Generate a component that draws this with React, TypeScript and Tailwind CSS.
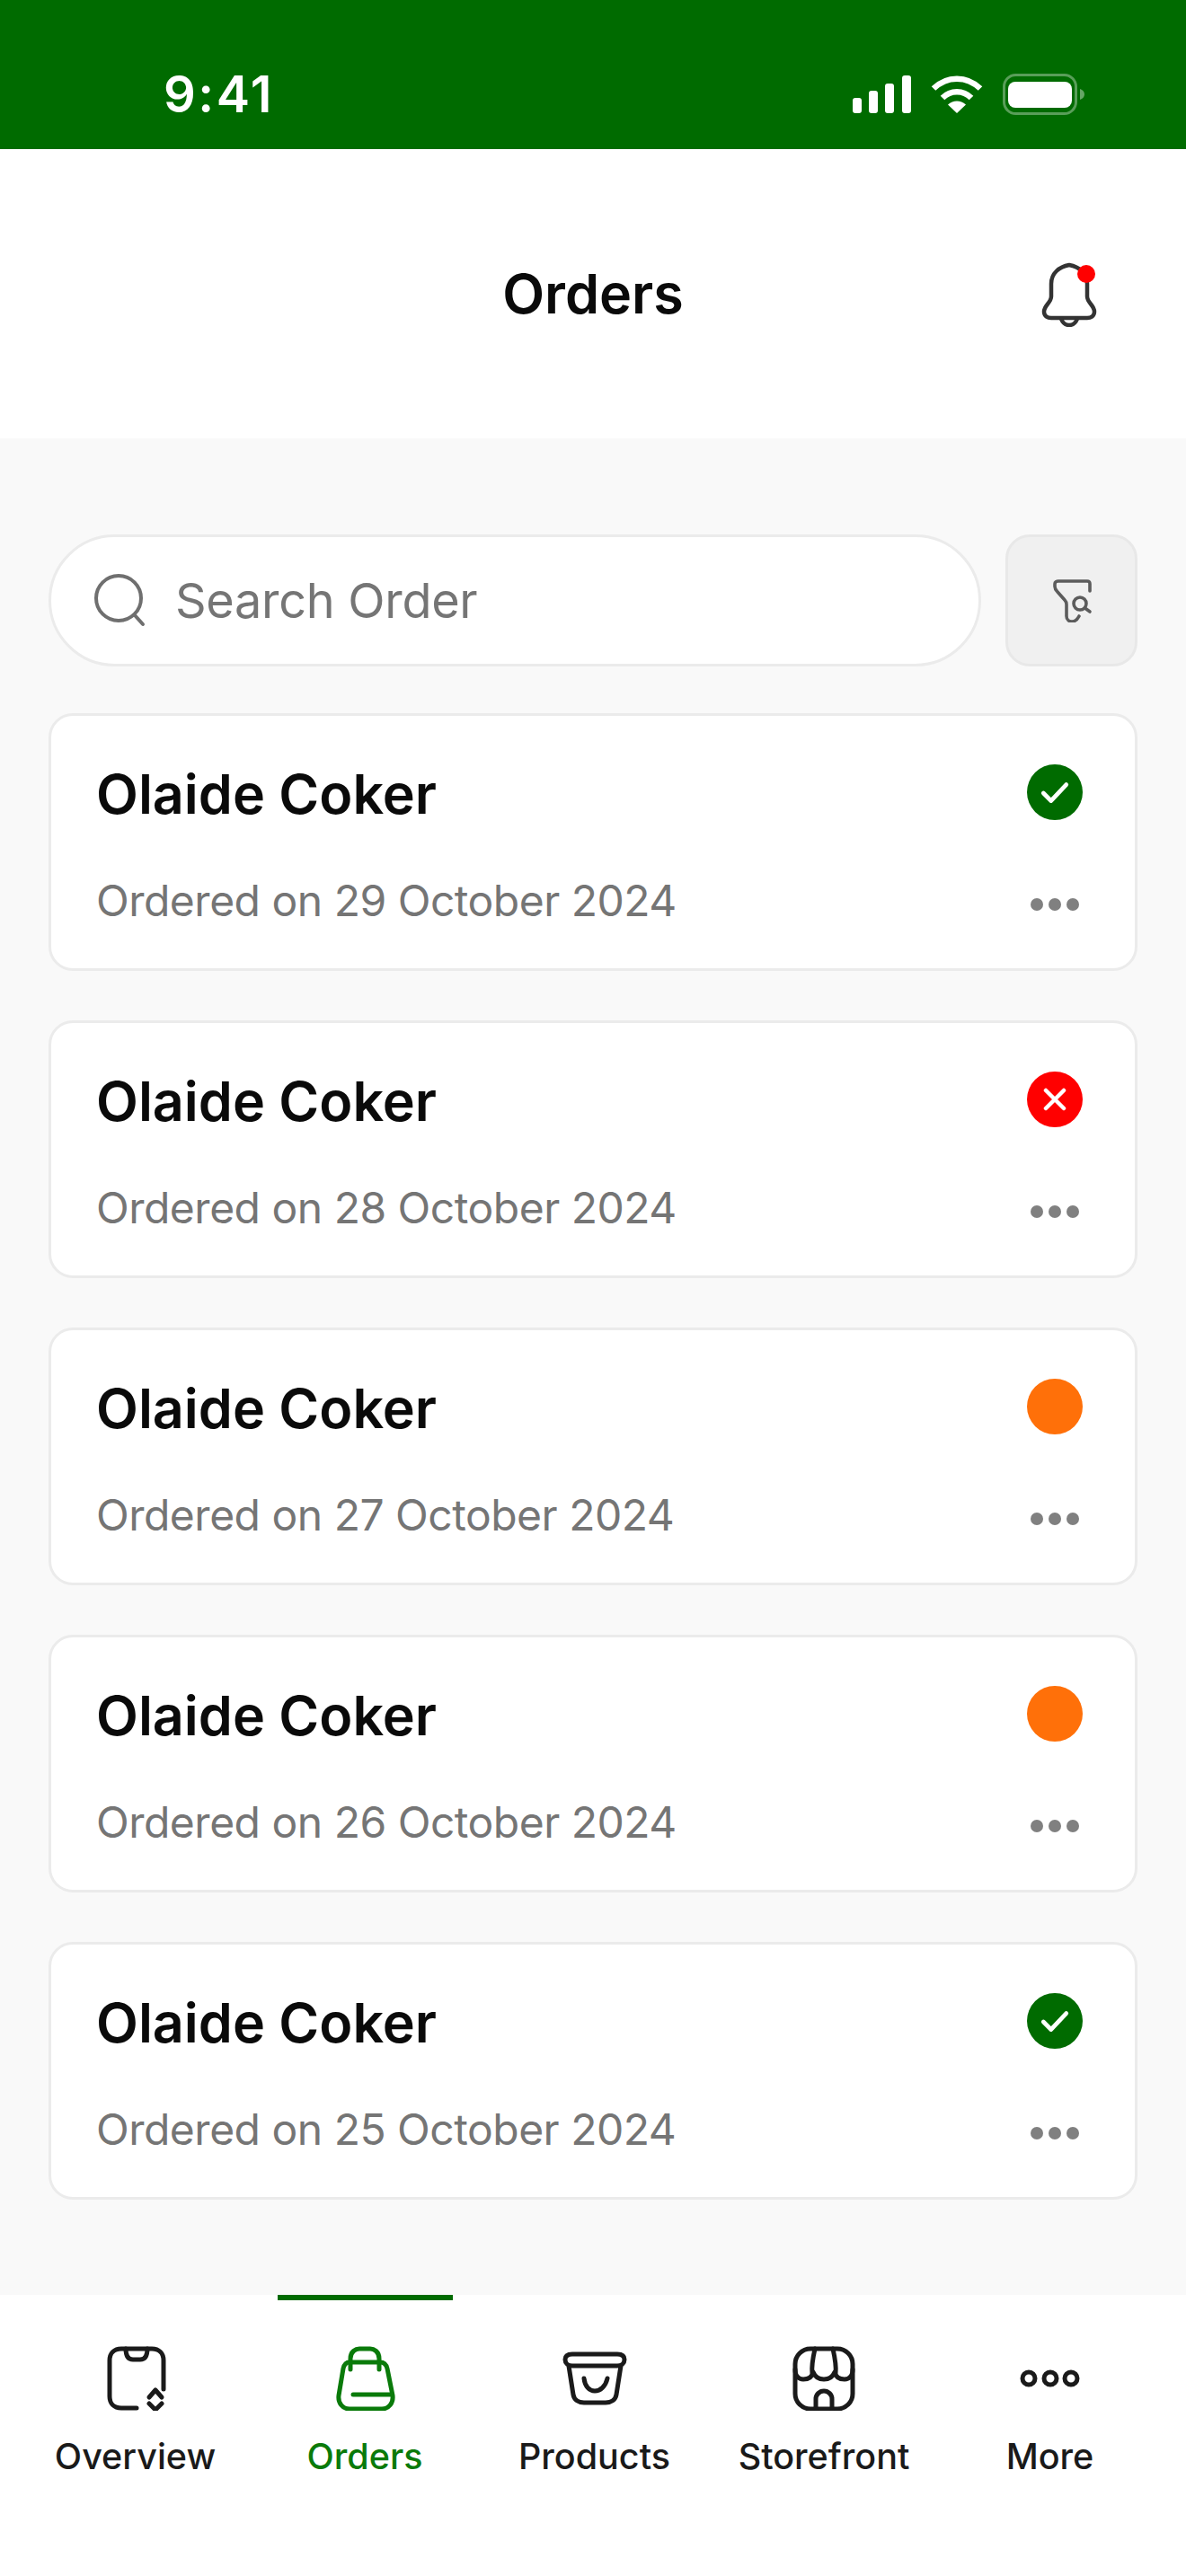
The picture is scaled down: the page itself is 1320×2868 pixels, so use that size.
import React from "react";

const inter = "font-['Inter',sans-serif]";

function Signal() {
  return (
    <svg width="65" height="42" viewBox="0 0 65 42" fill="#fff">
      <rect x="0" y="25" width="10" height="17" rx="3" />
      <rect x="18" y="17" width="10" height="25" rx="3" />
      <rect x="36" y="9" width="10" height="33" rx="3" />
      <rect x="55" y="0" width="10" height="42" rx="3" />
    </svg>
  );
}

function Wifi() {
  return (
    <svg width="58" height="42" viewBox="0 0 58 42" fill="none" stroke="#fff" strokeWidth="6.5">
      <path d="M3 14.5C18 0 40 0 55 14.5" />
      <path d="M13 25C22 16 36 16 45 25" />
      <path d="M29 42L19 32.5C25 27 33 27 39 32.5Z" fill="#fff" stroke="none" />
    </svg>
  );
}

function Battery() {
  return (
    <svg width="92" height="46" viewBox="0 0 92 46" fill="none">
      <rect x="1.5" y="1.5" width="80" height="43" rx="13" stroke="#fff" strokeOpacity="0.35" strokeWidth="3" />
      <rect x="6" y="9" width="71" height="29" rx="8" fill="#fff" />
      <path d="M86 17C89 18 91 20 91 23C91 26 89 28 86 29Z" fill="#fff" fillOpacity="0.4" />
    </svg>
  );
}

function Bell() {
  return (
    <div className="relative w-[72px] h-[72px]">
      <svg width="72" height="72" viewBox="0 0 72 72" fill="none" stroke="#333" strokeWidth="4.5" strokeLinejoin="round" strokeLinecap="round">
        <path d="M36 3C25 5 16 12 16 24V38C16 45 8 48 8 55C8 60 12 62 16 62H56C60 62 64 60 64 55C64 48 56 45 56 38V24C56 12 47 5 36 3Z" />
        <path d="M27 63C29 68 32 70 36 70C40 70 43 68 45 63" />
      </svg>
      <span className="absolute left-[45px] top-[3px] w-5 h-5 rounded-full bg-[#ff0000]" />
    </div>
  );
}

function SearchIcon() {
  return (
    <svg width="60" height="60" viewBox="0 0 60 60" fill="none" stroke="#6f6f6f" strokeWidth="4" strokeLinecap="round">
      <circle cx="28" cy="27" r="25" />
      <path d="M46 46L55 56" />
    </svg>
  );
}

function FilterIcon() {
  return (
    <svg width="48" height="48" viewBox="0 0 48 48" fill="none" stroke="#5c5c5c" strokeWidth="3.6" strokeLinecap="round" strokeLinejoin="round">
      <path d="M44 13V5C44 3 43 2 41 2H9C7 2 5 3 5 5V8C5 10 6 12 8 14L16 23C17.500 24.500 18 26 18 28V41C18 45 21 47 24 47C27 47 30 45 32 41" />
      <circle cx="33" cy="27" r="7" />
      <path d="M38.500 32L44 36" />
    </svg>
  );
}

function StatusIcon({ status }: { status: "ok" | "fail" | "pending" }) {
  const bg = status === "ok" ? "bg-[#006b00]" : status === "fail" ? "bg-[#ff0000]" : "bg-[#ff7009]";
  return (
    <div className={`w-[62px] h-[62px] rounded-full flex items-center justify-center ${bg}`}>
      {status === "ok" && (
        <svg width="36" height="36" viewBox="0 0 34 34" fill="none" stroke="#fff" strokeWidth="4.5" strokeLinecap="round" strokeLinejoin="round">
          <path d="M5 18L13 26L29 9" />
        </svg>
      )}
      {status === "fail" && (
        <svg width="26" height="26" viewBox="0 0 26 26" fill="none" stroke="#fff" strokeWidth="4.500" strokeLinecap="round">
          <path d="M3 3L23 23M23 3L3 23" />
        </svg>
      )}
    </div>
  );
}

function Dots() {
  return (
    <div className="flex gap-[6px]">
      <span className="w-[14px] h-[14px] rounded-full bg-[#808080]" />
      <span className="w-[14px] h-[14px] rounded-full bg-[#808080]" />
      <span className="w-[14px] h-[14px] rounded-full bg-[#808080]" />
    </div>
  );
}

function OverviewIcon() {
  return (
    <svg width="72" height="72" viewBox="0 0 72 72" fill="none" stroke="#1a1a1a" strokeWidth="5" strokeLinecap="round" strokeLinejoin="round">
      <path d="M37 69H20C12 69 7 64 7 56V16C7 8 12 3 20 3H54C62 3 67 8 67 16V48" />
      <path d="M25 3C25 11 28 15 33 15H41C46 15 49 11 49 3" />
      <path d="M51 57L58 49L65 57" />
      <path d="M51 64L58 71L65 64" />
    </svg>
  );
}

function OrdersIcon() {
  return (
    <svg width="72" height="72" viewBox="0 0 72 72" fill="none" stroke="#0a7a0a" strokeWidth="5" strokeLinecap="round" strokeLinejoin="round">
      <path d="M20 26V14C20 6 26 3 30 3H42C46 3 52 6 52 14V26" />
      <path d="M19 18H53C58 18 60 21 61 25L67 55C68 63 63 70 55 70H19C11 70 6 63 7 55L12 25C13 21 15 18 19 18Z" />
      <path d="M23 54H66" />
    </svg>
  );
}

function ProductsIcon() {
  return (
    <svg width="72" height="72" viewBox="0 0 72 72" fill="none" stroke="#1a1a1a" strokeWidth="5" strokeLinecap="round" strokeLinejoin="round">
      <path d="M11 9H61C66 9 69 11 69 15C69 19 66 22 61 22H11C6 22 3 19 3 15C3 11 6 9 11 9Z" />
      <path d="M7 22L12 54C13 60 18 63 24 63H48C54 63 59 60 60 54L65 22" />
      <path d="M24 36C25 45 30 50 36 50C42 50 48 45 50 36" />
    </svg>
  );
}

function StorefrontIcon() {
  return (
    <svg width="72" height="72" viewBox="0 0 72 72" fill="none" stroke="#1a1a1a" strokeWidth="5" strokeLinecap="round" strokeLinejoin="round">
      <rect x="4" y="3" width="64" height="67" rx="17" />
      <path d="M26 3C24 12 22 22 23 30M46 3C48 12 50 22 49 30" />
      <path d="M4 26C4 33 8 37 13 37C19 37 23 34 24 29C26 34 30 37 36 37C42 37 46 34 48 29C49 34 53 37 59 37C64 37 68 33 68 26" />
      <path d="M27 70V59C27 54 31 50 36 50C41 50 45 54 45 59V70" />
    </svg>
  );
}

function MoreIcon() {
  return (
    <svg width="72" height="72" viewBox="0 0 72 72" fill="none" stroke="#1a1a1a" strokeWidth="5">
      <circle cx="12" cy="36" r="7" />
      <circle cx="36" cy="36" r="7" />
      <circle cx="59" cy="36" r="7" />
    </svg>
  );
}

const orders: { date: string; status: "ok" | "fail" | "pending" }[] = [
  { date: "Ordered on 29 October 2024", status: "ok" },
  { date: "Ordered on 28 October 2024", status: "fail" },
  { date: "Ordered on 27 October 2024", status: "pending" },
  { date: "Ordered on 26 October 2024", status: "pending" },
  { date: "Ordered on 25 October 2024", status: "ok" },
];

function OrderCard({ date, status }: { date: string; status: "ok" | "fail" | "pending" }) {
  return (
    <div className="h-[287px] rounded-[27px] border-[3px] border-[#ebebeb] bg-white flex justify-between pl-[50px] pr-[58px]">
      <div className="flex flex-col pt-[50px]">
        <div className="text-[61px] leading-[74px] font-semibold text-[#0a0a0a]">Olaide Coker</div>
        <div className="mt-[53px] text-[48px] leading-[58px] text-[#757575] tracking-[-0.5px]">{date}</div>
      </div>
      <div className="flex flex-col items-center pt-[54px]">
        <StatusIcon status={status} />
        <div className="mt-[87px]">
          <Dots />
        </div>
      </div>
    </div>
  );
}

function NavItem({ label, active, last, children }: { label: string; active?: boolean; last?: boolean; children: React.ReactNode }) {
  return (
    <div className={`w-[195px] flex flex-col items-center border-t-[6px] pt-[51px] ${active ? "border-[#006b00]" : "border-transparent"} ${last ? "-ml-[4px]" : ""}`}>
      {children}
      <div className={`mt-[26px] text-[39.5px] leading-[50px] font-medium whitespace-nowrap ${active ? "text-[#0a7a0a]" : "text-[#1a1a1a]"}`}>
        {label}
      </div>
    </div>
  );
}

export default function App() {
  return (
    <div className={`${inter} w-[1320px] h-[2868px] flex flex-col bg-[#f9f9f9]`}>
      <div className="h-[166px] shrink-0 bg-[#006b00] flex items-end justify-between pl-[182px] pr-[112px] pb-[38px] text-white">
        <div className="text-[56px] leading-[46px] font-semibold tracking-[2.5px]">9:41</div>
        <div className="flex items-center gap-[22px]">
          <Signal />
          <Wifi />
          <Battery />
        </div>
      </div>

      <div className="h-[322px] shrink-0 bg-white relative flex items-center justify-center">
        <div className="text-[61px] leading-[72px] font-semibold text-[#0a0a0a]">Orders</div>
        <div className="absolute right-[94px] top-[126px]">
          <Bell />
        </div>
      </div>

      <div className="flex-1 px-[54px] pt-[107px] flex flex-col">
        <div className="flex gap-[27px]">
          <div className="w-[1038px] h-[147px] rounded-full border-[3px] border-[#ebebeb] bg-white flex items-center pl-[47px]">
            <SearchIcon />
            <div className="ml-[31px] text-[54px] leading-[64px] text-[#757575] tracking-[-0.3px]">Search Order</div>
          </div>
          <div className="w-[147px] h-[147px] rounded-[27px] border-[3px] border-[#e8e8e8] bg-[#f0f0f0] flex items-center justify-center">
            <FilterIcon />
          </div>
        </div>
        <div className="mt-[52px] flex flex-col gap-[55px]">
          {orders.map((o) => (
            <OrderCard key={o.date} date={o.date} status={o.status} />
          ))}
        </div>
      </div>

      <div className="h-[313px] shrink-0 bg-white flex gap-[60.5px] pl-[53px]">
        <NavItem label="Overview"><OverviewIcon /></NavItem>
        <NavItem label="Orders" active><OrdersIcon /></NavItem>
        <NavItem label="Products"><ProductsIcon /></NavItem>
        <NavItem label="Storefront"><StorefrontIcon /></NavItem>
        <NavItem label="More" last><MoreIcon /></NavItem>
      </div>
    </div>
  );
}
